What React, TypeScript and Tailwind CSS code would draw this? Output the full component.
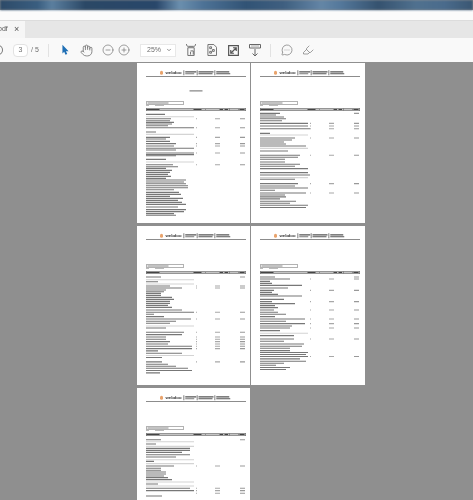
import React from "react";
import { Hand, CircleMinus, CirclePlus, MessageCircleMore, Highlighter, ChevronDown } from "lucide-react";

type Row = [number, number, string?];

const p1: Row[] = [[160,19],[167,48,"g"],[173,25,"a"],[179,24],[184,28],[189,26],[194,22],[200,48,"a"],[213,10],[220,48,"g"],[229,24,"q"],[234,20],[241,24],[248,30,"q"],[255,28,"q"],[262,48],[267,30],[276,48,"a"],[281,48],[284,30],[295,20],[303,48,"g"],[311,27,"a"],[317,32],[322,20],[328,26],[334,24],[340,22],[346,25],[352,20],[357,40],[363,38],[368,40],[374,42],[380,42],[386,28],[394,33],[400,35],[406,24],[412,37],[418,32],[424,36],[430,40],[438,32],[446,40],[452,38],[458,28],[463,30]];
const p2: Row[] = [[157,20,"r"],[162,16],[168,24],[173,26],[179,22],[187,48,"a"],[195,48,"a"],[203,50,"a"],[217,10],[222,48,"g"],[231,35,"a"],[237,32],[243,24],[249,26],[255,46],[262,48,"g"],[270,28],[283,40,"a"],[289,38],[295,25],[303,25],[310,40],[316,35],[323,48],[335,48],[342,50],[350,48,"g"],[355,35],[368,38,"a"],[375,35],[381,48],[388,15],[396,46,"a"],[402,25],[408,26],[414,20],[421,36],[427,30],[433,48],[440,46]];
const p3: Row[] = [[159,15,"r"],[167,48,"g"],[173,12],[180,48,"g"],[186,24,"a"],[192,36,"a"],[198,20],[203,18],[208,15],[214,15],[220,26],[226,28],[232,24],[238,24],[244,22],[250,26],[258,36],[265,48,"a"],[271,8],[278,18],[285,45,"a"],[292,30],[298,24],[306,48,"g"],[312,20],[325,38,"a"],[332,36],[339,20,"a"],[346,20,"a"],[353,24,"a"],[360,22,"a"],[367,46,"a"],[374,46,"a"],[381,12],[388,36],[395,48,"g"],[401,16],[414,16,"a"],[421,22],[427,30],[433,42],[440,46],[447,14]];
const p4: Row[] = [[159,15,"r"],[165,30,"a"],[172,10],[178,12],[184,42],[192,28],[199,14,"a"],[205,12],[211,18],[216,42],[226,24],[233,12,"a"],[239,35],[245,15],[251,18],[258,14,"a"],[265,18],[271,26],[278,15],[285,45,"a"],[292,26],[299,45,"a"],[306,32],[312,30,"a"],[320,20],[328,48,"g"],[335,34],[345,34,"a"],[352,24],[360,44],[367,42],[373,30],[380,30],[386,48],[392,46],[398,48,"a"],[405,40],[412,46],[418,24],[424,16],[431,30],[437,26]];
const p5: Row[] = [[161,15,"r"],[167,48,"g"],[174,10],[181,48,"g"],[187,44],[193,44],[199,36],[206,44],[213,30],[221,48,"g"],[226,8],[233,48,"g"],[240,28,"a"],[247,15],[253,15],[258,20],[264,20],[270,18],[275,22],[281,26],[288,48,"g"],[294,12],[300,48,"g"],[307,44,"a"],[314,48,"a"],[322,0,"a"],[330,16]];

const S = 4;
const RH = 4.4;

function Bar({ w, className = "bg-[#777777]" }: { w: number; className?: string }) {
  return <div className={`h-[4.4px] ${className}`} style={{ width: w * S }} />;
}

function Rows({ rows }: { rows: Row[] }) {
  let prev = 47.5 * S;
  return (
    <div className="flex flex-col">
      {rows.map(([z, w, k], i) => {
        const y = (z / 3 - 3) * S;
        const gap = Math.max(0, y - prev);
        prev = y + RH;
        if (k === "g") {
          return <div key={i} className="h-[4.4px] bg-[#d4d4d4] shrink-0" style={{ width: w * S, marginTop: gap }} />;
        }
        return (
          <div key={i} className="flex items-center h-[4.4px] shrink-0" style={{ marginTop: gap }}>
            <div className="w-[200px] shrink-0"><Bar w={w} /></div>
            <div className="w-[76px] shrink-0">{(k === "a" || k === "q") && <div className="w-[4px] h-[4.4px] bg-[#aaaaaa]" />}</div>
            <div className="w-[100px] shrink-0">{(k === "a" || k === "q") && <Bar w={5} className="bg-[#a8a8a8]" />}</div>
            <div className="w-[24px] shrink-0">{k && <Bar w={5} className="bg-[#999999]" />}</div>
          </div>
        );
      })}
    </div>
  );
}

function Page({ rows, title, logoOffset = 56 }: { rows: Row[]; title?: boolean; logoOffset?: number }) {
  return (
    <div className="h-[159.5px] bg-white overflow-hidden blur-[0.3px]">
      <div className="w-[454px] h-[638px] pl-[36px] pr-[18px] pt-[28px] scale-[0.25] origin-top-left">
        <div className="flex items-center h-[22px]" style={{ paddingLeft: logoOffset }}>
          <div className="w-[12px] h-[16px] rounded-full bg-[#e9a36c]" />
          <span className="ml-[10px] w-[64px] text-[17px] leading-[22px] font-bold text-[#333333] font-['Liberation_Sans',sans-serif] whitespace-nowrap">webdoo</span>
          <div className="ml-[8px] w-[3px] h-[20px] bg-[#555555]" />
          <div className="ml-[4px] w-[44px] flex flex-col gap-[3px]"><Bar w={11} className="bg-[#555555]" /><Bar w={9} className="bg-[#777777]" /></div>
          <div className="ml-[2px] w-[3px] h-[20px] bg-[#555555]" />
          <div className="ml-[4px] w-[60px] flex flex-col gap-[3px]"><Bar w={15} className="bg-[#555555]" /><Bar w={14} className="bg-[#555555]" /></div>
          <div className="ml-[4px] w-[3px] h-[20px] bg-[#555555]" />
          <div className="ml-[4px] w-[56px] flex flex-col gap-[3px]"><Bar w={13} className="bg-[#555555]" /><Bar w={14} className="bg-[#555555]" /></div>
        </div>
        <div className="h-[3px] mt-[2px] bg-[#666666]" />
        <div className="h-[79px] pt-[54px] flex justify-center">
          {title && <div className="h-[5px] w-[52px] bg-[#888888]" />}
        </div>
        <div className="mt-[20px] h-[12px] w-[152px] border-[2.5px] border-[#666666] flex items-center px-[4px]">
          <Bar w={21} className="bg-[#888888]" />
        </div>
        <div className="h-[4px] mt-[2px] flex gap-[24px] items-center"><Bar w={3} className="bg-[#bbbbbb]" /><Bar w={9} className="bg-[#bbbbbb]" /></div>
        <div className="mt-[8px] h-[12px] border-[2px] border-[#666666] bg-[#c4c4c4] flex items-center">
          <div className="w-[188px] shrink-0"><Bar w={13} className="bg-[#444444]" /></div>
          <div className="w-[48px] shrink-0 border-r-[2px] border-[#555555]"><Bar w={8} className="bg-[#444444]" /></div>
          <div className="w-[56px] shrink-0" />
          <div className="w-[20px] shrink-0 border-l-[2px] border-[#555555]"><Bar w={3} className="bg-[#444444]" /></div>
          <div className="w-[20px] shrink-0 border-l-[2px] border-[#555555]"><Bar w={3} className="bg-[#444444]" /></div>
          <div className="w-[36px] shrink-0 border-l-[2px] border-[#555555] h-[8px]" />
          <div className="w-[28px] shrink-0 border-l-[2px] border-[#555555] pl-[2px]"><Bar w={5} className="bg-[#444444]" /></div>
        </div>
        <Rows rows={rows} />
      </div>
    </div>
  );
}

function Fit1() {
  return (
    <svg viewBox="0 0 11 14" className="w-[10px] h-[14px]" fill="none" stroke="#666" strokeWidth="1">
      <path d="M.5 .5c0 2 1 2.500 2 2.500h6c1 0 2-.5 2-2.500M2 4.500h7V13H2zM5 8h3v4M5 12V9" />
    </svg>
  );
}
function Fit2() {
  return (
    <svg viewBox="0 0 11 13" className="w-[10px] h-[12px]" fill="none" stroke="#666" strokeWidth="1">
      <path d="M1 .5h6.500L10.500 3.500V12.500H1zM3 3h2v2H3zM6 6h2v2H6zM3 8h2v2H3z" />
    </svg>
  );
}
function Fit3() {
  return (
    <svg viewBox="0 0 12 12" className="w-[11px] h-[11px]" fill="none" stroke="#555" strokeWidth="1.300">
      <path d="M.7 .7h10.600v10.600H.7zM3 9l6-6M5.500 3H9v3.500M3 5.500V9h3.500" />
    </svg>
  );
}
function Dl() {
  return (
    <svg viewBox="0 0 12 13" className="w-[12px] h-[13px]" fill="none" stroke="#666" strokeWidth="1">
      <path d="M.5 .5h11v3.500H.5zM6 5v7M3.500 9.500 6 12l2.500-2.500" />
      <path d="M2 2h8" stroke="#aaa" />
    </svg>
  );
}

function Toolbar() {
  return (
    <div className="h-6 bg-[#f9f9f9] flex items-center shrink-0 text-[#6e6e6e] font-['Liberation_Sans',sans-serif] blur-[0.3px]">
      <div className="w-[5px] h-[10px] -ml-[2px] mr-[10px] rounded-full border border-[#777777] border-l-0 rounded-l-none" />
      <div className="w-[15px] h-[13px] bg-white border border-[#e2e2e2] rounded-sm text-[7px] flex items-center justify-center">3</div>
      <span className="ml-[3px] w-[10px] text-[7px] whitespace-pre">/ 5</span>
      <div className="ml-[7px] w-px h-[13px] bg-[#e2e2e2]" />
      <svg viewBox="0 0 8 13" className="ml-[13px] w-[7px] h-[12px]"><path d="M.5 .5v10l2-2 1.500 3.500 2-.8-1.500-3.400h3z" fill="#1f6fb5" /></svg>
      <Hand className="ml-[11px] w-[13px] h-[13px]" strokeWidth={1.5} />
      <CircleMinus className="ml-[9px] w-[12px] h-[12px]" strokeWidth={1.3} />
      <CirclePlus className="ml-[4px] w-[12px] h-[12px]" strokeWidth={1.3} />
      <div className="ml-[10px] w-[36px] h-[13px] bg-white border border-[#e8e8e8] flex items-center pl-[6px] pr-[3px] text-[7px] justify-between">
        <span>25%</span>
        <ChevronDown className="w-[6px] h-[6px]" strokeWidth={3} />
      </div>
      <div className="ml-[10px]"><Fit1 /></div>
      <div className="ml-[11px]"><Fit2 /></div>
      <div className="ml-[11px]"><Fit3 /></div>
      <div className="ml-[10px]"><Dl /></div>
      <div className="ml-[9px] w-px h-[13px] bg-[#e2e2e2]" />
      <MessageCircleMore className="ml-[10px] w-[12px] h-[12px]" strokeWidth={1.3} />
      <Highlighter className="ml-[9px] w-[12px] h-[12px]" strokeWidth={1.3} />
    </div>
  );
}

export default function App() {
  return (
    <div className="h-[500px] w-[473px] overflow-hidden flex flex-col bg-[#8f8f8f]">
      <div className="h-[10px] shrink-0 blur-[1px] bg-[linear-gradient(90deg,#2d4a68_0%,#3a5e80_8%,#5b7f9f_11%,#2b4866_18%,#29476a_33%,#6b8fae_38%,#4d7296_43%,#315375_52%,#3f5f80_60%,#6486a6_68%,#54789b_72%,#35526f_80%,#50718f_88%,#4a6b8c_94%,#3a5672_100%)]" />
      <div className="h-[10px] shrink-0 bg-[#fbfbfb]" />
      <div className="h-[18px] shrink-0 bg-[#e6e6e6] border-t border-[#dcdcdc] flex font-['Liberation_Sans',sans-serif]">
        <div className="w-[25px] bg-[#f6f6f6] flex items-center text-[7px] text-[#555555] overflow-hidden blur-[0.3px]">
          <span className="ml-[-2px] w-[11px]">pdf</span>
          <span className="ml-[5px] text-[9px] leading-none">×</span>
        </div>
      </div>
      <Toolbar />
      <div className="pt-px pl-[136.5px] grid grid-cols-[113.5px_113.5px] gap-x-px gap-y-[3px] content-start">
        <Page rows={p1} title />
        <Page rows={p2} />
        <Page rows={p3} />
        <Page rows={p4} />
        <Page rows={p5} />
      </div>
    </div>
  );
}
